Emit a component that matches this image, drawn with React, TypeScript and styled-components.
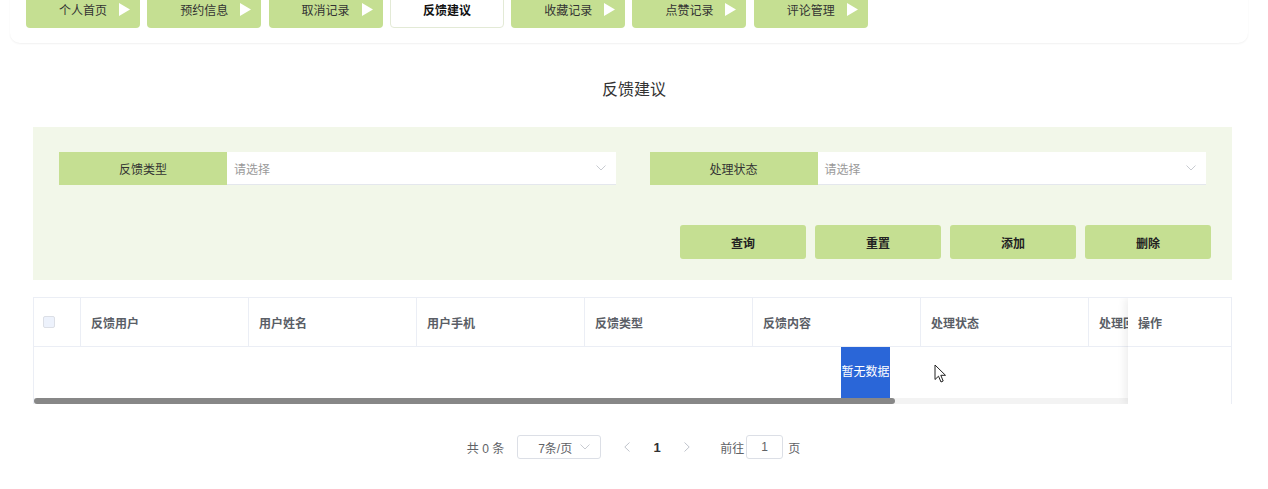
import React from 'react';
import styled, { createGlobalStyle } from 'styled-components';

const GlobalStyle = createGlobalStyle`
  html, body { margin: 0; padding: 0; background: #fff; }
  body {
    font-family: "Liberation Sans", "Noto Sans CJK SC", sans-serif;
    color: #333;
    font-size: 12px;
  }
  * { box-sizing: border-box; }
`;

const GREEN = '#c5df92';

const Page = styled.div`
  width: 1268px;
`;

const NavCard = styled.nav`
  margin: -10px 20px 0 10px;
  padding: 0 16px 15px;
  background: #fff;
  border-radius: 0 0 10px 10px;
  box-shadow: 0 1px 2px rgba(0, 0, 0, 0.06);
  display: flex;
  gap: 7.3px;
`;

const Tab = styled.div<{ $active?: boolean }>`
  width: 114px;
  height: 38px;
  display: grid;
  grid-template-columns: 1fr auto 1fr;
  align-items: center;
  border-radius: 4px;
  background: ${(p) => (p.$active ? '#fff' : GREEN)};
  border: ${(p) => (p.$active ? '1px solid #e3ead6' : '1px solid transparent')};
  font-size: 12px;
  color: ${(p) => (p.$active ? '#111' : '#333')};
  font-weight: ${(p) => (p.$active ? 700 : 400)};
`;

const TabText = styled.span`
  grid-column: 2;
  white-space: nowrap;
`;

const TabArrow = styled.svg`
  grid-column: 3;
  justify-self: end;
  margin-right: 9px;
`;

const Title = styled.h2`
  margin: 36px 0 26px;
  text-align: center;
  font-size: 16px;
  line-height: 22px;
  font-weight: 400;
  color: #333;
`;

const Section = styled.div`
  margin: 0 36px 0 33px;
`;

const FilterPanel = styled.div`
  background: #f2f7e9;
  padding: 25px 21px 21px 26px;
`;

const FieldRow = styled.div`
  display: grid;
  grid-template-columns: 1fr 1fr;
  gap: 34px;
  margin-right: 5px;
`;

const Field = styled.div`
  display: flex;
  height: 33px;
`;

const FieldLabel = styled.div`
  width: 168px;
  flex: none;
  background: ${GREEN};
  display: flex;
  align-items: center;
  justify-content: center;
  font-size: 12px;
  color: #333;
`;

const SelectBox = styled.div`
  flex: 1;
  background: #fff;
  border-bottom: 1px solid #e4e7ed;
  display: flex;
  align-items: center;
  justify-content: space-between;
  padding: 0 10px 0 7px;
  color: #9a9a9a;
  font-size: 12px;
`;

const ButtonRow = styled.div`
  margin-top: 40px;
  display: flex;
  justify-content: flex-end;
  gap: 9px;
`;

const ActionButton = styled.button`
  width: 126px;
  height: 34px;
  border: none;
  border-radius: 3px;
  background: ${GREEN};
  font-family: inherit;
  font-size: 12px;
  font-weight: 700;
  color: #222;
  padding: 0;
`;

const TableWrap = styled.div`
  position: relative;
  margin-top: 17px;
  border: 1px solid #ebeef5;
  border-bottom: none;
  overflow: hidden;
`;

const ScrollArea = styled.div`
  overflow: hidden;
`;

const Inner = styled.div`
  width: 1662px;
`;

const COLS = '47px repeat(9, 168px) 103px';

const HeaderRow = styled.div`
  display: grid;
  grid-template-columns: ${COLS};
  height: 49px;
  border-bottom: 1px solid #ebeef5;
`;

const HeaderCell = styled.div`
  display: flex;
  align-items: center;
  padding-left: 10px;
  border-right: 1px solid #ebeef5;
  font-size: 12px;
  font-weight: 700;
  color: #5a5e66;
  white-space: nowrap;
  overflow: hidden;
`;

const CheckBox = styled.span`
  width: 12px;
  height: 12px;
  margin-left: -1px;
  border: 1px solid #dcdfe6;
  background: #edf2fc;
  border-radius: 2px;
`;

const EmptyRow = styled.div`
  height: 51px;
  display: flex;
  justify-content: center;
`;

const EmptyText = styled.span`
  background: #2a66d8;
  color: #fff;
  font-size: 12px;
  line-height: 51px;
  margin-left: 1px;
`;

const Track = styled.div`
  height: 6px;
  background: #f3f3f3;
`;

const Thumb = styled.div`
  height: 6px;
  background: #878787;
  border-radius: 3px;
`;

const FixedColumn = styled.div`
  position: absolute;
  right: 0;
  top: 0;
  bottom: 0;
  width: 103px;
  background: #fff;
  box-shadow: -3px 0 8px rgba(0, 0, 0, 0.07);
`;

const FixedHeader = styled.div`
  height: 49px;
  border-bottom: 1px solid #ebeef5;
  display: flex;
  align-items: center;
  padding-left: 10px;
  font-size: 12px;
  font-weight: 700;
  color: #5a5e66;
`;

const Cursor = styled.svg`
  position: absolute;
  left: 900px;
  top: 66px;
`;

const Pagination = styled.div`
  margin-top: 29px;
  display: flex;
  justify-content: center;
  align-items: center;
  height: 28px;
  font-size: 12px;
  color: #606266;
  padding-left: 2px;
`;

const Total = styled.span`
  margin-right: 13px;
`;

const SizeSelect = styled.div`
  width: 84px;
  height: 24px;
  border: 1px solid #dcdfe6;
  border-radius: 3px;
  display: flex;
  align-items: center;
  justify-content: space-between;
  padding: 0 10px 0 20px;
  color: #606266;
`;

const PagerBtn = styled.div<{ $current?: boolean }>`
  width: 30px;
  height: 28px;
  display: flex;
  align-items: center;
  justify-content: center;
  font-size: 13px;
  font-weight: ${(p) => (p.$current ? 700 : 400)};
  color: ${(p) => (p.$current ? '#303133' : '#c0c4cc')};
`;

const Prev = styled(PagerBtn)`
  margin-left: 11px;
`;

const Jump = styled.div`
  margin-left: 18px;
  display: flex;
  align-items: center;
`;

const JumpInput = styled.div`
  width: 37px;
  height: 24px;
  margin: 0 5px 0 2px;
  border: 1px solid #dcdfe6;
  border-radius: 3px;
  display: flex;
  align-items: center;
  justify-content: center;
  color: #606266;
`;

const Chevron = ({ color = '#c8cbd1' }: { color?: string }) => (
  <svg width="10" height="6" viewBox="0 0 10 6">
    <polyline points="0.5,0.5 5,5 9.5,0.5" fill="none" stroke={color} strokeWidth="1" />
  </svg>
);

const tabs = ['个人首页', '预约信息', '取消记录', '反馈建议', '收藏记录', '点赞记录', '评论管理'];
const columns = ['反馈用户', '用户姓名', '用户手机', '反馈类型', '反馈内容', '处理状态', '处理回复', '', ''];

export default function App() {
  const thumbRatio = 1199 / 1662;
  return (
    <Page>
      <GlobalStyle />
      <NavCard>
        {tabs.map((t, i) => {
          const active = i === 3;
          return (
            <Tab key={t} $active={active}>
              <TabText>{t}</TabText>
              {!active && (
                <TabArrow width="11" height="13" viewBox="0 0 11 13">
                  <polygon points="0,0 11,6.5 0,13" fill="#fff" />
                </TabArrow>
              )}
            </Tab>
          );
        })}
      </NavCard>

      <Title>反馈建议</Title>

      <Section>
        <FilterPanel>
          <FieldRow>
            <Field>
              <FieldLabel>反馈类型</FieldLabel>
              <SelectBox>
                <span>请选择</span>
                <Chevron />
              </SelectBox>
            </Field>
            <Field>
              <FieldLabel>处理状态</FieldLabel>
              <SelectBox>
                <span>请选择</span>
                <Chevron />
              </SelectBox>
            </Field>
          </FieldRow>
          <ButtonRow>
            <ActionButton>查询</ActionButton>
            <ActionButton>重置</ActionButton>
            <ActionButton>添加</ActionButton>
            <ActionButton>删除</ActionButton>
          </ButtonRow>
        </FilterPanel>

        <TableWrap>
          <ScrollArea>
            <Inner>
              <HeaderRow>
                <HeaderCell>
                  <CheckBox />
                </HeaderCell>
                {columns.map((c, i) => (
                  <HeaderCell key={i}>{c}</HeaderCell>
                ))}
                <HeaderCell />
              </HeaderRow>
              <EmptyRow>
                <EmptyText>暂无数据</EmptyText>
              </EmptyRow>
            </Inner>
          </ScrollArea>
          <Track>
            <Thumb style={{ width: `${thumbRatio * 100 - 0.2}%` }} />
          </Track>
          <FixedColumn>
            <FixedHeader>操作</FixedHeader>
          </FixedColumn>
          <Cursor width="13" height="19" viewBox="0 0 13 19">
            <path d="M1 1 L1 15.5 L4.5 12.2 L7 18 L9.2 17 L6.8 11.3 L11.5 11.3 Z" fill="#fff" stroke="#222" strokeWidth="1" strokeLinejoin="round" />
          </Cursor>
        </TableWrap>

        <Pagination>
          <Total>共 0 条</Total>
          <SizeSelect>
            <span>7条/页</span>
            <Chevron />
          </SizeSelect>
          <Prev>
            <svg width="6" height="10" viewBox="0 0 6 10">
              <polyline points="5.5,0.5 0.8,5 5.5,9.5" fill="none" stroke="#c0c4cc" strokeWidth="1" />
            </svg>
          </Prev>
          <PagerBtn $current>1</PagerBtn>
          <PagerBtn>
            <svg width="6" height="10" viewBox="0 0 6 10">
              <polyline points="0.5,0.5 5.2,5 0.5,9.5" fill="none" stroke="#c0c4cc" strokeWidth="1" />
            </svg>
          </PagerBtn>
          <Jump>
            <span>前往</span>
            <JumpInput>1</JumpInput>
            <span>页</span>
          </Jump>
        </Pagination>
      </Section>
    </Page>
  );
}
